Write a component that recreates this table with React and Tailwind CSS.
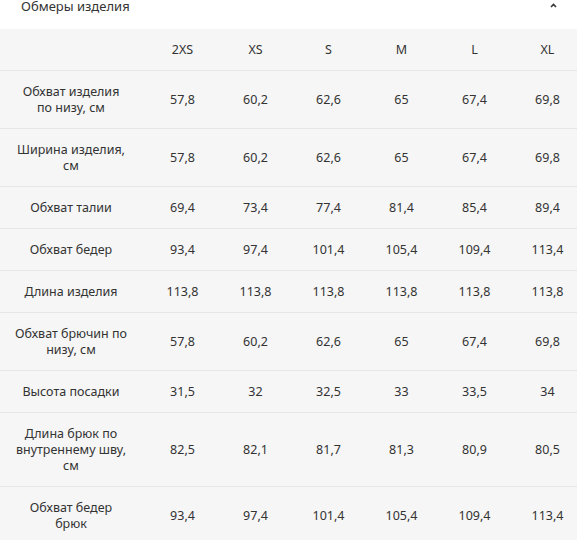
import React from 'react';

const sizes = ['2XS', 'XS', 'S', 'M', 'L', 'XL'];

const rows = [
    { label: ['Обхват изделия', 'по низу, см'], values: ['57,8', '60,2', '62,6', '65', '67,4', '69,8'] },
    { label: ['Ширина изделия,', 'см'], values: ['57,8', '60,2', '62,6', '65', '67,4', '69,8'] },
    { label: ['Обхват талии'], values: ['69,4', '73,4', '77,4', '81,4', '85,4', '89,4'] },
    { label: ['Обхват бедер'], values: ['93,4', '97,4', '101,4', '105,4', '109,4', '113,4'] },
    { label: ['Длина изделия'], values: ['113,8', '113,8', '113,8', '113,8', '113,8', '113,8'] },
    { label: ['Обхват брючин по', 'низу, см'], values: ['57,8', '60,2', '62,6', '65', '67,4', '69,8'] },
    { label: ['Высота посадки'], values: ['31,5', '32', '32,5', '33', '33,5', '34'] },
    { label: ['Длина брюк по', 'внутреннему шву,', 'см'], values: ['82,5', '82,1', '81,7', '81,3', '80,9', '80,5'] },
    { label: ['Обхват бедер', 'брюк'], values: ['93,4', '97,4', '101,4', '105,4', '109,4', '113,4'] },
];

const ChevronUp = () => (
    <svg width="7" height="5" viewBox="0 0 7 5" fill="none">
        <path d="M1 4L3.5 1.5L6 4" stroke="#333" strokeWidth="1.6" />
    </svg>
);

export default function App() {
    return (
        <div className="w-[577px] h-[540px] overflow-hidden bg-white text-[#333] font-['Noto_Sans',sans-serif] text-[12.5px]">
            <div className="h-[29px] flex items-start justify-between pl-[21px] pr-[20px]">
                <span className="text-[13px] leading-[14px] -mt-[1px]">Обмеры изделия</span>
                <span className="mt-[3px]"><ChevronUp /></span>
            </div>
            <div className="bg-[#f6f6f6] w-[584px]">
                <div className="grid grid-cols-[146px_repeat(6,73px)] h-[42px] items-center border-b border-[#e6e6e6]">
                    <div />
                    {sizes.map((s) => (
                        <div key={s} className="text-center leading-4">{s}</div>
                    ))}
                </div>
                {rows.map((row) => (
                    <div key={row.label.join(' ')} className="grid grid-cols-[146px_repeat(6,73px)] items-center border-b border-[#e6e6e6] pt-[13px] pb-[12px]">
                        <div className="pl-[12px] pr-[16px] text-center leading-4 whitespace-nowrap">
                            {row.label.map((line, i) => (
                                <div key={i}>{line}</div>
                            ))}
                        </div>
                        {row.values.map((v, i) => (
                            <div key={i} className="text-center leading-4">{v}</div>
                        ))}
                    </div>
                ))}
            </div>
        </div>
    );
}
